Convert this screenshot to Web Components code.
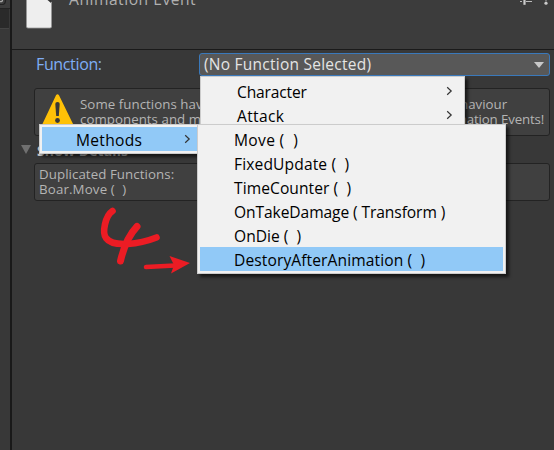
<!DOCTYPE html>
<html lang="en"><head><meta charset="utf-8"><title>Animation Event</title>
<style>html,body{margin:0;width:554px;height:450px;overflow:hidden;background:#383838}</style></head><body>
<event-inspector></event-inspector>
<script>
// A single line of text spread evenly across the width given in its "w" attribute.
class FitText extends HTMLElement{
  constructor(){super();this.attachShadow({mode:'open'}).innerHTML='<style>:host{display:block;white-space:pre;flex:none}span{display:inline-block}</style><span><slot></slot></span>';}
  connectedCallback(){
    const w=+this.getAttribute('w'),s=this.shadowRoot.querySelector('span');
    this.style.width=w+'px';
    const n=this.textContent.length;
    s.style.letterSpacing=((w-.8-s.getBoundingClientRect().width)/n).toFixed(3)+'px';
  }
}
class MenuRow extends HTMLElement{
  constructor(){super();this.attachShadow({mode:'open'}).innerHTML=`<style>
  :host{display:flex;height:24px;line-height:22px;padding-left:34px;align-items:center;box-sizing:border-box;color:#000;font-size:15.6px}
  :host([active]){background:#91c9f7}
  ::slotted(fit-text){padding-top:2px}
  svg{display:none;margin-left:auto;margin-right:9px}
  :host([sub]) svg{display:block}</style><slot></slot>
  <svg width="7" height="10" viewBox="0 0 7 10"><path d="M1.2 1.2 5.2 5 1.2 8.8" fill="none" stroke="#333" stroke-width="1.2"/></svg>`;}
}
class PopupMenu extends HTMLElement{
  constructor(){super();this.attachShadow({mode:'open'}).innerHTML=`<style>
  :host{display:block;position:absolute;box-sizing:border-box;border:1px solid #ccc;padding:2px;background:#f1f1f1;box-shadow:3px 3px 3px rgba(0,0,0,.6)}</style><slot></slot>`;}
}
class HelpBox extends HTMLElement{
  constructor(){super();this.attachShadow({mode:'open'}).innerHTML=`<style>
  :host{display:flex;box-sizing:border-box;border:1px solid #232323;border-radius:3px;background:#404040;color:#b4b4b4;font-size:13.3px;line-height:15px;width:516px}</style><slot></slot>`;}
}
customElements.define('help-box',HelpBox);
class EventInspector extends HTMLElement{
  constructor(){super();this.attachShadow({mode:'open'}).innerHTML=`<style>
  :host{display:flex;position:relative;width:554px;height:450px;overflow:hidden;background:#383838;font-family:"Open Sans","Noto Sans",sans-serif}
  .side{width:10px;flex:none;border-right:2px solid #191919;background:#383838}
  .side .bar{height:8px;border-bottom:1px solid #232323;background:#3c3c3c}
  .side .bar svg{display:block}
  .side .search{height:19px;width:9px;background:#2a2a2a;border-bottom:1px solid #444}
  .main{flex:1;display:flex;flex-direction:column}
  header{height:49px;background:#3c3c3c;border-bottom:1px solid #1a1a1a;display:flex;align-items:flex-start;flex:none}
  header .file{margin-left:13px;flex:none}
  header fit-text{margin:-13px 0 0 16px;font-size:15.6px;line-height:24px;color:#b0b0b0}
  header .tools{margin-left:auto}
  .field{display:flex;padding:3px 0 0 24px;height:23px;align-items:center;color:#7fadf5;font-size:16px;flex:none}
  .field>fit-text{margin-top:-1px}
  .select{box-sizing:border-box;width:351px;height:23px;border:1px solid #3a79bb;border-radius:3px;background:#585858;color:#e4e4e4;display:flex;align-items:center;padding:0 5px 0 4px;margin-left:auto;margin-right:4px;font-size:15.5px;line-height:21px}
  .select fit-text{margin-top:-1px}
  .select svg{margin-left:auto}
  .warn{height:48px;margin:12px 0 0 22px;padding:5px 4px 0 6px;flex:none}
  .warn svg{flex:none;margin-right:5px}
  .left,.right{padding-top:3px}.right{margin-left:auto}.right fit-text{margin-left:auto}
  .fold{height:27px;display:flex;align-items:center;padding-left:9px;gap:6px;font-size:14px;font-weight:700;color:#c4c4c4;line-height:22px;box-sizing:border-box;flex:none}
  .fold fit-text{padding-top:2px}
  .dup{height:38px;margin-left:22px;padding:3px 0 0 4px;flex-direction:column}
  .m1{left:200px;top:76px;width:265px;height:54px}
  .m2{left:39px;top:124px;width:164px;height:30px}
  .m3{left:197px;top:124px;width:309px;height:150px}
  .ink{position:absolute;left:90px;top:190px}
  </style>
  <div class="side"><div class="bar"><svg width="8" height="8"><path d="M0 4.5H3Q5.5 4 5.5 0" fill="none" stroke="#222" stroke-width="1.2"/><path d="M0 1.5Q2.5 2 2.5 0" fill="none" stroke="#aaa" stroke-width="1.3"/></svg></div><div class="search"></div></div>
  <div class="main">
   <header>
    <svg class="file" width="28" height="30"><path d="M1.5-2H22.5L26.5 2.5V26.5Q26.5 28 25 28H3Q1.5 28 1.5 26.5Z" fill="#eee" stroke="#999" stroke-width=".8"/><path d="M22.5-1V0L26 3V-1Z" fill="#333"/></svg>
    <fit-text w="128">Animation Event</fit-text>
    <svg class="tools" width="34" height="6"><path d="M0 1.5H2M6 1.5H12" stroke="#bbb" stroke-width="1.2"/><path d="M4.5 0V4.8" stroke="#ccc" stroke-width="2.2"/><circle cx="26" cy="3.2" r="1.6" fill="#ccc"/><path d="M25 0H27" stroke="#aaa"/></svg>
   </header>
   <div class="field"><fit-text w="66.5">Function:</fit-text><div class="select"><fit-text w="168">(No Function Selected)</fit-text><svg width="10" height="6"><path d="M0 0H10L5 6Z" fill="#c8c8c8"/></svg></div></div>
   <help-box class="warn"><svg width="34" height="38" viewBox="0 0 34 38"><path d="M15 1.2Q16.5-.8 18 1.2L33 32Q34 34 32 34H1Q-.5 34 .5 32Z" fill="#ffc107"/><path d="M14.3 10Q14.2 8 16.5 8T18.7 10L17.8 22H15.2Z" fill="#383838"/><circle cx="16.5" cy="26.5" r="2.4" fill="#383838"/></svg>
    <div class="left"><fit-text w="131">Some functions have</fit-text><fit-text w="136">components and may</fit-text></div>
    <div class="right"><fit-text w="64" style="margin-right:37px">Behaviour</fit-text><fit-text w="110">Animation Events!</fit-text></div>
   </help-box>
   <div class="fold"><svg width="10" height="9"><path d="M0 0H10L5 9Z" fill="#707070"/></svg><fit-text w="92">Show Details</fit-text></div>
   <help-box class="dup"><fit-text w="136">Duplicated Functions:</fit-text><fit-text w="88">Boar.Move (  )</fit-text></help-box>
  </div>
  <popup-menu class="m1"><menu-row sub><fit-text w="70.5">Character</fit-text></menu-row><menu-row sub><fit-text w="48">Attack</fit-text></menu-row></popup-menu>
  <popup-menu class="m2"><menu-row sub active><fit-text w="67">Methods</fit-text></menu-row></popup-menu>
  <popup-menu class="m3">
   <menu-row><fit-text w="65">Move (  )</fit-text></menu-row><menu-row><fit-text w="116">FixedUpdate (  )</fit-text></menu-row><menu-row><fit-text w="118">TimeCounter (  )</fit-text></menu-row><menu-row><fit-text w="212">OnTakeDamage ( Transform )</fit-text></menu-row><menu-row><fit-text w="68">OnDie (  )</fit-text></menu-row><menu-row active><fit-text w="192">DestoryAfterAnimation (  )</fit-text></menu-row></popup-menu>
  <svg class="ink" width="110" height="90" fill="none" stroke="#ec1c24" stroke-linecap="round" stroke-linejoin="round"><path d="M22.500 21C15 26 12 43 16 48C23 58 50 54 66.500 47.500" stroke-width="6.600"/><path d="M47 36.500C37 47 33 60 30.500 71" stroke-width="7"/><path d="M56 77 85 75.500" stroke-width="4.600"/><path d="M79.500 66 100 73 81 83.500 84 75Z" fill="#ec1c24" stroke="none"/></svg>`;
  }
}
customElements.define('fit-text',FitText);
customElements.define('menu-row',MenuRow);
customElements.define('popup-menu',PopupMenu);
customElements.define('event-inspector',EventInspector);
</script></body></html>
